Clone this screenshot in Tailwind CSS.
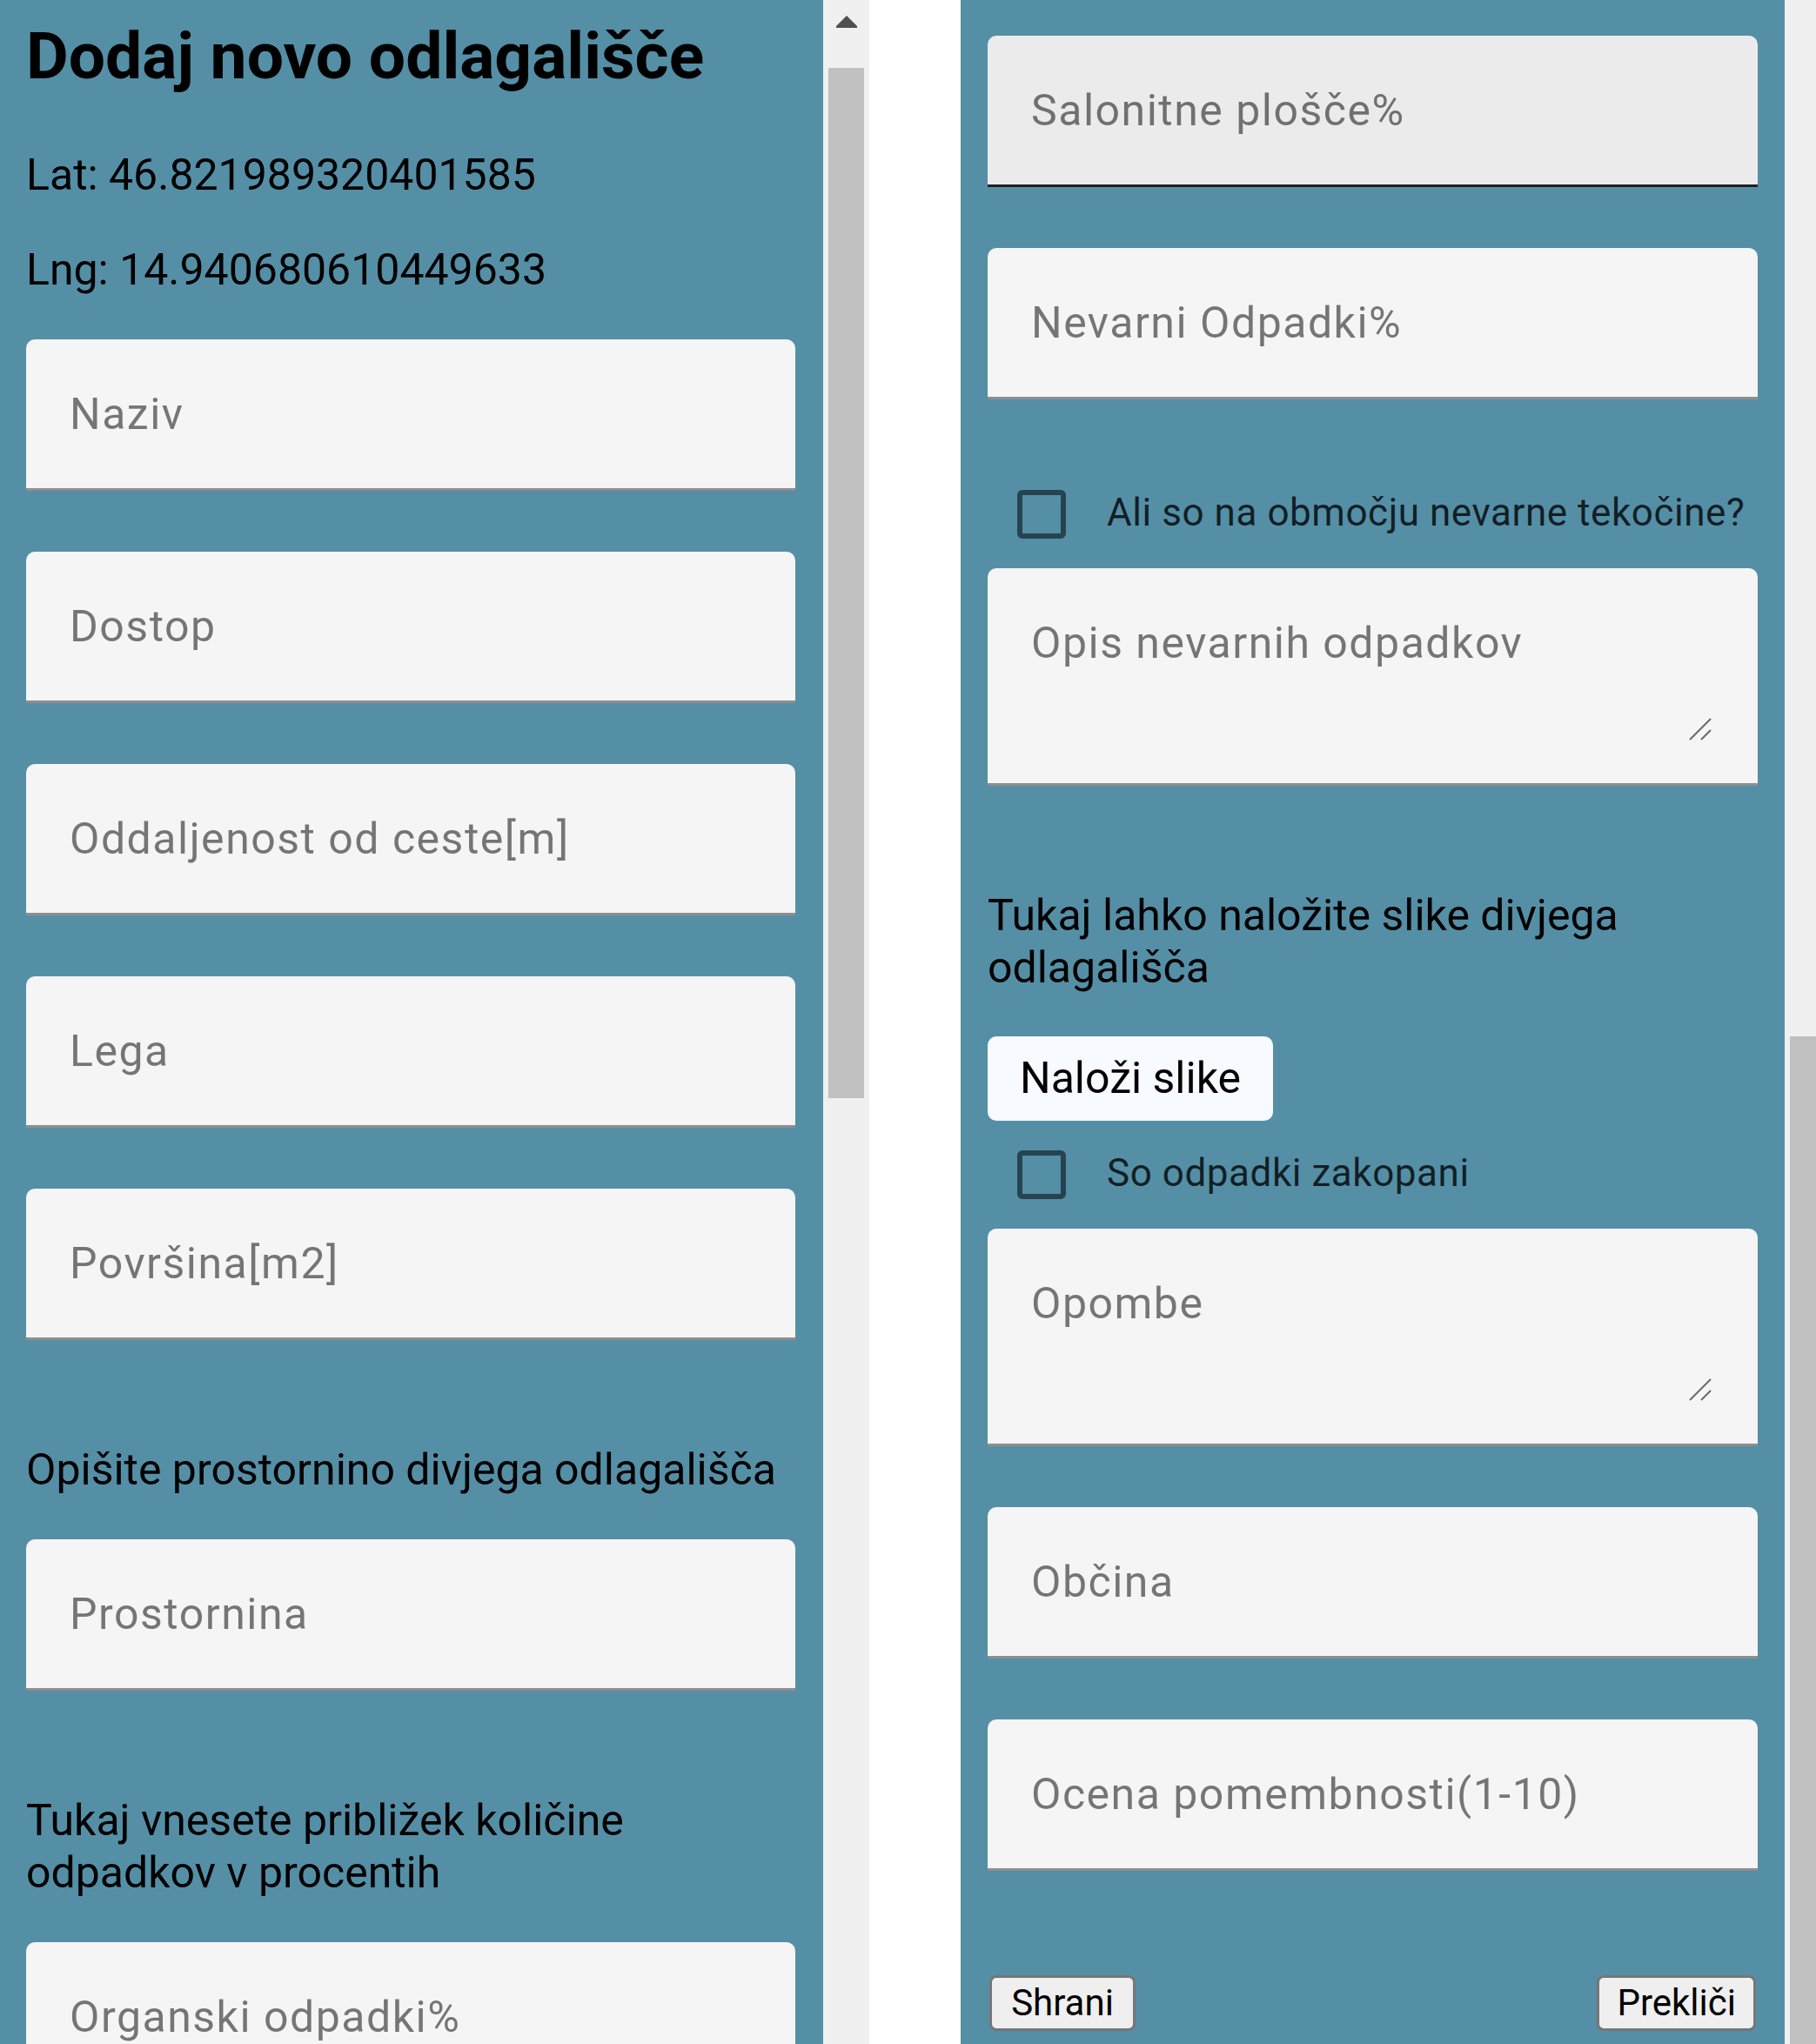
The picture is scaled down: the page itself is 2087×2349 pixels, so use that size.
<!DOCTYPE html>
<html lang="sl">
<head>
<meta charset="utf-8">
<title>Dodaj novo odlagališče</title>
<script src="https://cdn.jsdelivr.net/npm/@tailwindcss/browser@4"></script>
</head>
<body class="bg-white font-[Roboto,sans-serif] text-[50px] leading-[60px] text-black">
<main class="flex h-screen gap-[105px] overflow-hidden">

  <!-- Top of the form -->
  <section class="flex min-w-0 flex-[999] overflow-hidden">
    <form class="min-w-0 flex-1 bg-[#548fa6] pt-5 pr-8 pl-[30px]">
      <h1 class="mb-[63px] text-[75px] leading-[88px] font-bold">Dodaj novo odlagališče</h1>
      <p class="mb-[49px]">Lat: 46.821989320401585</p>
      <p class="mb-[50px]">Lng: 14.940680610449633</p>
      <div class="mb-[70px] grid h-[174px]">
        <input id="naziv" type="text" class="col-start-1 row-start-1 rounded-t-[10px] border-b-[3px] border-[#8e8e8e] bg-[#f5f5f5] px-[50px] outline-none">
        <label for="naziv" class="pointer-events-none col-start-1 row-start-1 self-center px-[50px] pb-[3px] tracking-[0.03em] text-black/52">Naziv</label>
      </div>
      <div class="mb-[70px] grid h-[174px]">
        <input id="dostop" type="text" class="col-start-1 row-start-1 rounded-t-[10px] border-b-[3px] border-[#8e8e8e] bg-[#f5f5f5] px-[50px] outline-none">
        <label for="dostop" class="pointer-events-none col-start-1 row-start-1 self-center px-[50px] pb-[3px] tracking-[0.03em] text-black/52">Dostop</label>
      </div>
      <div class="mb-[70px] grid h-[174px]">
        <input id="oddaljenost" type="text" class="col-start-1 row-start-1 rounded-t-[10px] border-b-[3px] border-[#8e8e8e] bg-[#f5f5f5] px-[50px] outline-none">
        <label for="oddaljenost" class="pointer-events-none col-start-1 row-start-1 self-center px-[50px] pb-[3px] tracking-[0.03em] text-black/52">Oddaljenost od ceste[m]</label>
      </div>
      <div class="mb-[70px] grid h-[174px]">
        <input id="lega" type="text" class="col-start-1 row-start-1 rounded-t-[10px] border-b-[3px] border-[#8e8e8e] bg-[#f5f5f5] px-[50px] outline-none">
        <label for="lega" class="pointer-events-none col-start-1 row-start-1 self-center px-[50px] pb-[3px] tracking-[0.03em] text-black/52">Lega</label>
      </div>
      <div class="mb-[119px] grid h-[174px]">
        <input id="povrsina" type="text" class="col-start-1 row-start-1 rounded-t-[10px] border-b-[3px] border-[#8e8e8e] bg-[#f5f5f5] px-[50px] outline-none">
        <label for="povrsina" class="pointer-events-none col-start-1 row-start-1 self-center px-[50px] pb-[3px] tracking-[0.03em] text-black/52">Površina[m2]</label>
      </div>
      <p class="mb-[50px]">Opišite prostornino divjega odlagališča</p>
      <div class="mb-[119px] grid h-[174px]">
        <input id="prostornina" type="text" class="col-start-1 row-start-1 rounded-t-[10px] border-b-[3px] border-[#8e8e8e] bg-[#f5f5f5] px-[50px] outline-none">
        <label for="prostornina" class="pointer-events-none col-start-1 row-start-1 self-center px-[50px] pb-[3px] tracking-[0.03em] text-black/52">Prostornina</label>
      </div>
      <p class="mb-[50px]">Tukaj vnesete približek količine odpadkov v procentih</p>
      <div class="grid h-[174px]">
        <input id="organski" type="text" class="col-start-1 row-start-1 rounded-t-[10px] border-b-[3px] border-[#8e8e8e] bg-[#f5f5f5] px-[50px] outline-none">
        <label for="organski" class="pointer-events-none col-start-1 row-start-1 self-center px-[50px] pb-[3px] tracking-[0.03em] text-black/52">Organski odpadki%</label>
      </div>
    </form>
    <div class="flex w-[53px] shrink-0 flex-col items-center bg-[#f0f0f0]">
      <div class="flex h-[78px] shrink-0 items-start pt-[18px]">
        <svg width="24" height="14" viewBox="0 0 24 14" fill="#505050" aria-hidden="true"><path d="M12 0 24 12v2H0v-2z"/></svg>
      </div>
      <div class="h-[1184px] w-[41px] shrink-0 bg-[#c0c0c0]"></div>
    </div>
  </section>

  <!-- Bottom of the form -->
  <section class="flex min-w-0 flex-[983] overflow-hidden">
    <form class="min-w-0 flex-1 bg-[#548fa6] px-[31px] pt-[41px]">
      <div class="mb-[70px] grid h-[174px]">
        <input id="salonitne" type="text" class="col-start-1 row-start-1 rounded-t-[10px] border-b-[3px] border-[#202020] bg-[#ebebeb] px-[50px] outline-none">
        <label for="salonitne" class="pointer-events-none col-start-1 row-start-1 self-center px-[50px] pb-[3px] tracking-[0.03em] text-black/52">Salonitne plošče%</label>
      </div>
      <div class="mb-[70px] grid h-[174px]">
        <input id="nevarni" type="text" class="col-start-1 row-start-1 rounded-t-[10px] border-b-[3px] border-[#8e8e8e] bg-[#f5f5f5] px-[50px] outline-none">
        <label for="nevarni" class="pointer-events-none col-start-1 row-start-1 self-center px-[50px] pb-[3px] tracking-[0.03em] text-black/52">Nevarni Odpadki%</label>
      </div>
      <div class="flex h-[124px] items-center pl-[34px]">
        <input id="tekocine" type="checkbox" class="size-14 shrink-0 appearance-none rounded-md border-6 border-[#274350]">
        <label for="tekocine" class="pb-[5px] pl-[47px] text-[44px] tracking-[0.0125em] whitespace-nowrap text-black/80">Ali so na območju nevarne tekočine?</label>
      </div>
      <div class="mb-[119px] grid h-[250px]">
        <textarea id="opis" class="col-start-1 row-start-1 resize-none rounded-t-[10px] border-b-[3px] border-[#8e8e8e] bg-[#f5f5f5] px-[50px] pt-[56px] outline-none"></textarea>
        <label for="opis" class="pointer-events-none col-start-1 row-start-1 self-start px-[50px] pt-[56px] tracking-[0.03em] text-black/52">Opis nevarnih odpadkov</label>
        <svg class="pointer-events-none col-start-1 row-start-1 mr-[53px] mb-[52px] self-end justify-self-end" width="26" height="27" viewBox="0 0 26 27" fill="none" stroke="#6a6a6a" stroke-width="2" aria-hidden="true"><path d="M1 26 25 2M14 26 25 15"/></svg>
      </div>
      <p class="mb-[49px]">Tukaj lahko naložite slike divjega odlagališča</p>
      <button type="button" class="block h-[97px] rounded-[10px] bg-[#f7faff] px-[37px] pb-0.5">Naloži slike</button>
      <div class="flex h-[124px] items-center pl-[34px]">
        <input id="zakopani" type="checkbox" class="size-14 shrink-0 appearance-none rounded-md border-6 border-[#274350]">
        <label for="zakopani" class="pb-[5px] pl-[47px] text-[44px] tracking-[0.0125em] whitespace-nowrap text-black/80">So odpadki zakopani</label>
      </div>
      <div class="mb-[70px] grid h-[250px]">
        <textarea id="opombe" class="col-start-1 row-start-1 resize-none rounded-t-[10px] border-b-[3px] border-[#8e8e8e] bg-[#f5f5f5] px-[50px] pt-[56px] outline-none"></textarea>
        <label for="opombe" class="pointer-events-none col-start-1 row-start-1 self-start px-[50px] pt-[56px] tracking-[0.03em] text-black/52">Opombe</label>
        <svg class="pointer-events-none col-start-1 row-start-1 mr-[53px] mb-[52px] self-end justify-self-end" width="26" height="27" viewBox="0 0 26 27" fill="none" stroke="#6a6a6a" stroke-width="2" aria-hidden="true"><path d="M1 26 25 2M14 26 25 15"/></svg>
      </div>
      <div class="mb-[70px] grid h-[174px]">
        <input id="obcina" type="text" class="col-start-1 row-start-1 rounded-t-[10px] border-b-[3px] border-[#8e8e8e] bg-[#f5f5f5] px-[50px] outline-none">
        <label for="obcina" class="pointer-events-none col-start-1 row-start-1 self-center px-[50px] pb-[3px] tracking-[0.03em] text-black/52">Občina</label>
      </div>
      <div class="mb-[120px] grid h-[174px]">
        <input id="ocena" type="text" class="col-start-1 row-start-1 rounded-t-[10px] border-b-[3px] border-[#8e8e8e] bg-[#f5f5f5] px-[50px] outline-none">
        <label for="ocena" class="pointer-events-none col-start-1 row-start-1 self-center px-[50px] pb-[3px] tracking-[0.03em] text-black/52">Ocena pomembnosti(1-10)</label>
      </div>
      <div class="flex justify-between px-0.5 text-[42px]">
        <button type="submit" class="h-16 min-w-[168px] rounded-lg border-[3px] border-[#767676] bg-[#efefef] px-5 leading-[58px]">Shrani</button>
        <button type="button" class="h-16 min-w-[168px] rounded-lg border-[3px] border-[#767676] bg-[#efefef] px-5 leading-[58px]">Prekliči</button>
      </div>
    </form>
    <div class="flex w-9 shrink-0 flex-col bg-[#f0f0f0] pt-[1191px] pl-1.5">
      <div class="flex-1 bg-[#c0c0c0]"></div>
    </div>
  </section>
</main>
</body>
</html>
